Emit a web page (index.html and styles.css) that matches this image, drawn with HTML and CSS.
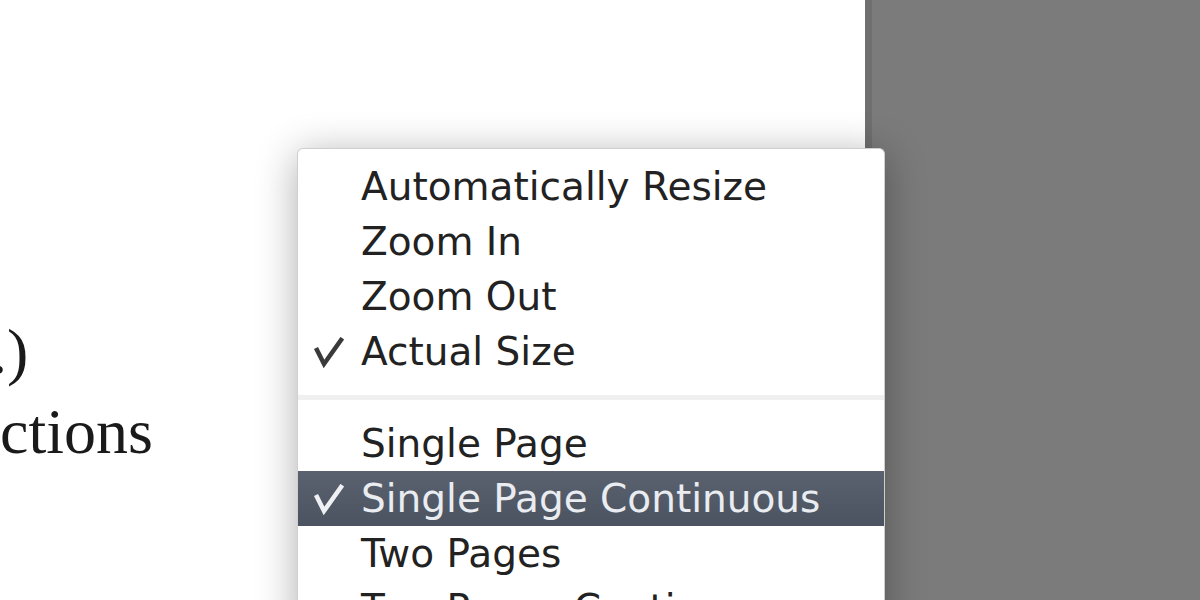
FILE: index.html
```html
<!DOCTYPE html>
<html lang="en">
<head>
  <meta charset="UTF-8" />
  <title>View Menu</title>
  <link rel="stylesheet" href="styles.css">
</head>
<body>
  <div class="page">
    <p class="doc-line first">.)</p>
    <p class="doc-line">ctions</p>
  </div>
  <div class="backdrop"></div>

  <ul class="menu">
    <li class="item">Automatically Resize</li>
    <li class="item">Zoom In</li>
    <li class="item">Zoom Out</li>
    <li class="item checked">
      <svg class="check" width="32" height="32" viewBox="0 0 32 32"><path d="M4 13 L11 27 L28 3" /></svg>
      Actual Size
    </li>
    <li class="separator"></li>
    <li class="item">Single Page</li>
    <li class="item checked active">
      <svg class="check" width="32" height="32" viewBox="0 0 32 32"><path d="M4 13 L11 27 L28 3" /></svg>
      Single Page Continuous
    </li>
    <li class="item">Two Pages</li>
    <li class="item">Two Pages Continuous</li>
  </ul>
</body>
</html>
```

FILE: styles.css
```css
html, body {
  margin: 0;
  height: 600px;
  overflow: hidden;
}

body {
  display: flex;
  background: #7b7b7b;
}

.page {
  width: 865px;
  flex-shrink: 0;
  background: #fff;
  padding-top: 312px;
  box-sizing: border-box;
  font-family: "Liberation Serif", "Times New Roman", serif;
  font-size: 64px;
  color: #1a1a1a;
}

.doc-line {
  margin: 0;
  line-height: 80px;
}

.doc-line.first {
  text-indent: -9px;
}

.backdrop {
  flex: 1;
  background: #7b7b7b;
  border-left: 7px solid #6f6f6f;
}

.menu {
  position: absolute;
  left: 297px;
  top: 148px;
  width: 586px;
  margin: 0;
  padding: 10px 0 0;
  list-style: none;
  background: #fff;
  border: 1px solid #cfcfcf;
  border-bottom: none;
  border-radius: 6px 6px 0 0;
  box-shadow: 0 6px 40px rgba(0, 0, 0, 0.32);
  font-family: "DejaVu Sans", Verdana, sans-serif;
  font-size: 39px;
  color: #222;
}

.item {
  position: relative;
  height: 55px;
  line-height: 55px;
  padding-left: 63px;
  white-space: nowrap;
}

.separator {
  height: 37px;
  background: linear-gradient(#fff 16px, #f0f0f0 16px, #f0f0f0 21px, #fff 21px);
}

.check {
  position: absolute;
  left: 15px;
  top: 13px;
  fill: none;
  stroke: #3a3a3a;
  stroke-width: 4.5;
  stroke-linecap: square;
}

.item.active {
  background: linear-gradient(#5a626f, #4b5360);
  color: #e9ecf0;
}

.item.active .check {
  stroke: #eef0f3;
}
```
